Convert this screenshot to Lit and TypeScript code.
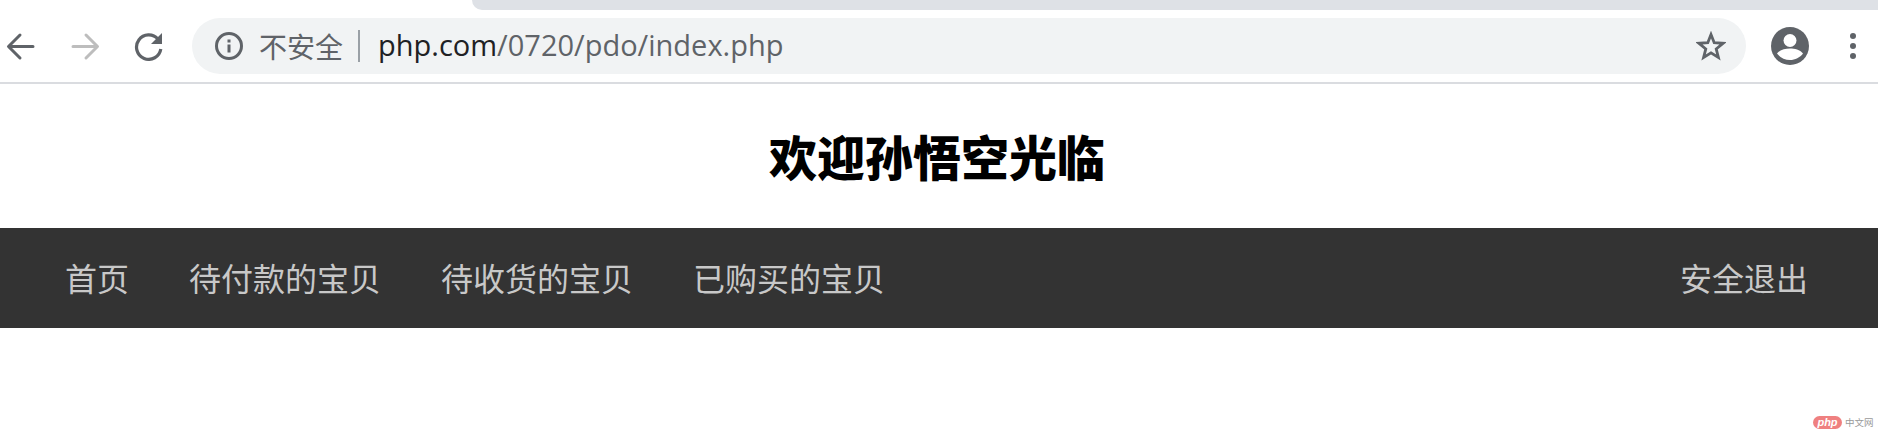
import { LitElement, html, css } from "lit";
import { customElement } from "lit/decorators.js";

@customElement("app-root")
export class AppRoot extends LitElement {
  static styles = css`
    :host { display: block; width: 1878px; height: 432px; position: relative; overflow: hidden; background: #fff; font-family: "Noto Sans CJK SC", sans-serif; }
    .chrome { height: 84px; box-sizing: border-box; border-bottom: 2px solid #dadce0; display: flex; flex-direction: column; }
    .tabstrip { height: 10px; margin-left: 472px; background: #dee1e6; border-bottom-left-radius: 14px; flex: none; }
    .toolbar { flex: none; height: 56px; margin-top: 8px; display: flex; align-items: center; }
    .icon { display: block; flex: none; }
    .back { margin-left: 6px; }
    .forward { margin-left: 36px; }
    .reload { margin-left: 34px; }
    .omni { margin-left: 28px; width: 1554px; height: 56px; border-radius: 28px; background: #f1f3f4; display: flex; align-items: center; box-sizing: border-box; padding-left: 22px; }
    .secure { margin-left: 15px; font-size: 28px; color: #5f6368; line-height: 56px; font-family: "Noto Sans CJK SC", sans-serif; }
    .sep { width: 2px; height: 32px; background: #9aa0a6; margin-left: 15px; flex: none; }
    .url { margin-left: 18px; font-size: 29px; color: #5f6368; font-family: "Open Sans", "Noto Sans", sans-serif; line-height: 54px; height: 56px; white-space: nowrap; }
    .url b { font-weight: 400; color: #202124; }
    .star { margin-left: auto; margin-right: 20px; }
    .avatar { margin-left: 25px; }
    .menu { margin-left: 41px; }
    .title { height: 144px; display: flex; align-items: center; justify-content: center; font-size: 48px; font-weight: 900; color: #000; margin: 0; line-height: 1; padding: 0 4px 2px 0; box-sizing: border-box; }
    nav { height: 100px; background: #333; display: flex; align-items: center; padding: 0 40px 0 35px; }
    nav a { font-size: 32px; color: #c8c8c8; padding: 0 30px; text-decoration: none; font-weight: 400; line-height: 98px; height: 100px; white-space: nowrap; }
    nav a.logout { margin-left: auto; }
    .wm { position: absolute; left: 1813px; top: 416px; display: flex; align-items: center; gap: 3px; }
    .pill { width: 29px; height: 13px; border-radius: 7px; background: #ef8080; color: #fff; font: italic 700 11px/13px "Liberation Sans", sans-serif; text-align: center; }
    .wmtext { font-size: 9.5px; line-height: 13px; color: #9a9a9a; }
  `;

  render() {
    return html`
      <div class="chrome">
        <div class="tabstrip"></div>
        <div class="toolbar">
          <svg class="icon back" width="29" height="29" viewBox="0 0 29 29" fill="none" stroke="#5f6368" stroke-width="3" stroke-linecap="round" stroke-linejoin="round">
            <path d="M27 14.5H3M14 3L2.5 14.5L14 26" />
          </svg>
          <svg class="icon forward" width="29" height="29" viewBox="0 0 29 29" fill="none" stroke="#bdbdbd" stroke-width="3" stroke-linecap="round" stroke-linejoin="round">
            <path d="M2 14.5H26M15 3L26.5 14.5L15 26" />
          </svg>
          <svg class="icon reload" width="30" height="30" viewBox="0 0 30 30">
            <path d="M24 8.2A12.2 12.2 0 1 0 26.8 18" fill="none" stroke="#5f6368" stroke-width="3.2" />
            <path d="M28 2V13H17Z" fill="#5f6368" />
          </svg>
          <div class="omni">
            <svg class="icon" width="30" height="30" viewBox="0 0 30 30">
              <circle cx="15" cy="15" r="12.5" fill="none" stroke="#5f6368" stroke-width="3" />
              <rect x="13.5" y="13.5" width="3" height="8" fill="#5f6368" />
              <rect x="13.5" y="8.5" width="3" height="3" fill="#5f6368" />
            </svg>
            <span class="secure">不安全</span>
            <span class="sep"></span>
            <span class="url"><b>php.com</b>/0720/pdo/index.php</span>
            <svg class="icon star" width="30" height="30" viewBox="0 0 30 30">
              <path d="M15 3.5L18.2 11.7L27 12.3L20.2 17.9L22.4 26.5L15 21.8L7.6 26.5L9.8 17.9L3 12.3L11.8 11.7Z" fill="none" stroke="#5f6368" stroke-width="2.8" stroke-linejoin="miter" />
            </svg>
          </div>
          <svg class="icon avatar" width="38" height="38" viewBox="0 0 38 38">
            <circle cx="19" cy="19" r="19" fill="#5f6368" />
            <circle cx="19" cy="13.5" r="6.5" fill="#fff" />
            <path d="M6 26.5C9 22.5 14.5 21.5 19 21.5C23.5 21.5 29 22.5 32 26.5C29 30.5 24 33 19 33C14 33 9 30.5 6 26.5Z" fill="#fff" />
          </svg>
          <svg class="icon menu" width="6" height="26" viewBox="0 0 6 26" fill="#5f6368">
            <circle cx="3" cy="3" r="3" /><circle cx="3" cy="13" r="3" /><circle cx="3" cy="23" r="3" />
          </svg>
        </div>
      </div>
      <h1 class="title">欢迎孙悟空光临</h1>
      <nav>
        <a>首页</a><a>待付款的宝贝</a><a>待收货的宝贝</a><a>已购买的宝贝</a>
        <a class="logout">安全退出</a>
      </nav>
      <div class="wm"><span class="pill">php</span><span class="wmtext">中文网</span></div>
    `;
  }
}
